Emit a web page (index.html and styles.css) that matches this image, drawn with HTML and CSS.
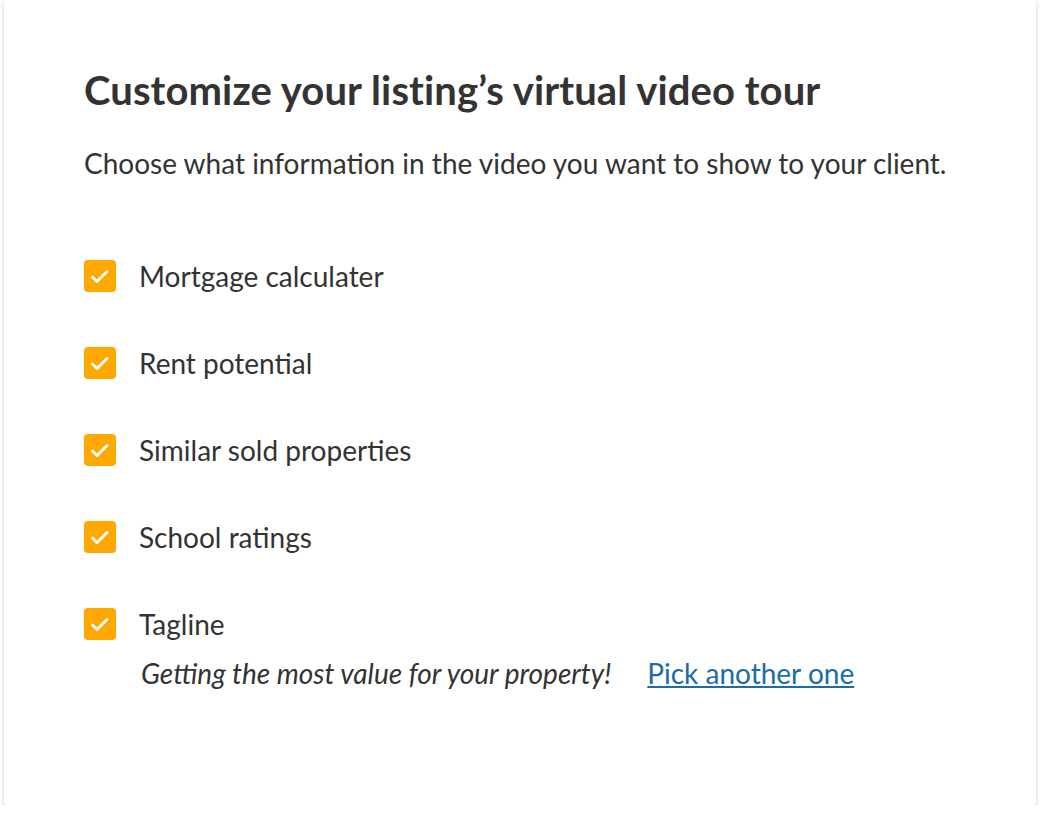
FILE: index.html
```html
<!DOCTYPE html>
<html lang="en">
<head>
    <meta charset="UTF-8">
    <meta name="viewport" content="width=device-width, initial-scale=1.0">
    <title>Customize virtual tour</title>
    <link rel="stylesheet" href="styles.css">
</head>
<body>

    <!-- Tour settings card -->
    <div class="card">
        <h1>Customize your listing’s virtual video tour</h1>
        <p class="intro">Choose what information in the video you want to show to your client.</p>

        <ul class="options">
            <li class="option">
                <span class="check"><svg viewBox="0 0 32 32"><path d="M8.5 17l4.5 4.5 10-10"/></svg></span>
                <span>Mortgage calculater</span>
            </li>
            <li class="option">
                <span class="check"><svg viewBox="0 0 32 32"><path d="M8.5 17l4.5 4.5 10-10"/></svg></span>
                <span>Rent potential</span>
            </li>
            <li class="option">
                <span class="check"><svg viewBox="0 0 32 32"><path d="M8.5 17l4.5 4.5 10-10"/></svg></span>
                <span>Similar sold properties</span>
            </li>
            <li class="option">
                <span class="check"><svg viewBox="0 0 32 32"><path d="M8.5 17l4.5 4.5 10-10"/></svg></span>
                <span>School ratings</span>
            </li>
            <li class="option">
                <span class="check"><svg viewBox="0 0 32 32"><path d="M8.5 17l4.5 4.5 10-10"/></svg></span>
                <span>Tagline</span>
            </li>
        </ul>

        <div class="tagline">
            <em>Getting the most value for your property!</em>
            <a href="#">Pick another one</a>
        </div>
    </div>

</body>
</html>
```

FILE: styles.css
```css
* {
    margin: 0;
    padding: 0;
    box-sizing: border-box;
}

body {
    font-family: 'Lato', 'Open Sans', sans-serif;
    background-color: #fff;
    color: #333;
    padding: 0 4px;
}

/* Card */
.card {
    background-color: #fff;
    height: 805px;
    padding: 66px 80px 0;
    border-radius: 0 0 4px 4px;
    box-shadow: 0 2px 4px rgba(0, 0, 0, 0.22);
}

h1 {
    font-size: 40px;
    font-weight: bold;
    line-height: 48px;
    letter-spacing: 0.1px;
    color: #333;
}

.intro {
    margin-top: 33px;
    font-size: 28px;
    line-height: 32px;
}

/* Checkbox list */
.options {
    list-style: none;
    margin-top: 81px;
    display: flex;
    flex-direction: column;
    gap: 55px;
}

.option {
    display: flex;
    align-items: center;
    gap: 23px;
    font-size: 28px;
    line-height: 32px;
}

.check {
    width: 32px;
    height: 32px;
    border-radius: 4px;
    background-color: #ffa800;
    display: flex;
}

.check svg {
    width: 32px;
    height: 32px;
    fill: none;
    stroke: #fff;
    stroke-width: 3;
    stroke-linecap: round;
    stroke-linejoin: round;
}

.tagline {
    margin: 17px 0 0 57px;
    display: flex;
    gap: 36px;
    font-size: 28px;
    line-height: 32px;
}

.tagline a {
    color: #1b6ca8;
}
```
